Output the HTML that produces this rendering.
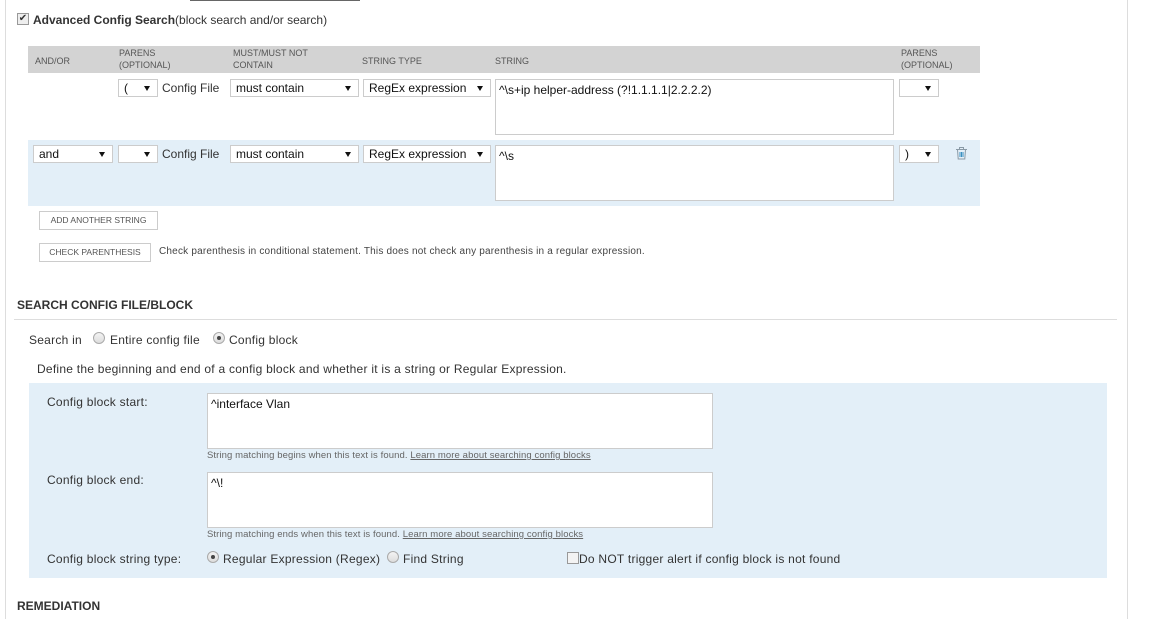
<!DOCTYPE html>
<html><head><meta charset="utf-8"><style>
*{box-sizing:border-box;margin:0;padding:0}
body{width:1157px;height:619px;background:#fff;position:relative;overflow:hidden;font-family:"Liberation Sans",sans-serif;color:#333}
.a{position:absolute;white-space:nowrap}
.sel{position:absolute;background:#fff;border:1px solid #ccc;height:18px;font-size:12px;color:#111;padding:1px 5px;line-height:14px}
.sel:after{content:"";position:absolute;right:7px;top:6px;border-left:3.5px solid transparent;border-right:3.5px solid transparent;border-top:5px solid #111}
.ta{position:absolute;background:#fff;border:1px solid #ccc;font-size:12px;color:#111;padding:4px 3px;line-height:13px}
.h{position:absolute;font-size:9px;color:#555;line-height:12px}
.btn{position:absolute;border:1px solid #ccc;background:#fff;font-size:8.5px;color:#555;text-align:center;line-height:16px}
.lbl{position:absolute;font-size:12px;color:#333;letter-spacing:0.25px;white-space:nowrap}
.radio{position:absolute;width:12px;height:12px;border-radius:50%;border:1px solid #aaa;background:linear-gradient(#f3f3f3,#ddd)}
.radio.on:after{content:"";position:absolute;left:3px;top:3px;width:4px;height:4px;border-radius:50%;background:#444}
.hint{position:absolute;font-size:9.5px;color:#666;letter-spacing:0.1px;white-space:nowrap}
.hint u{color:#666}
</style></head><body>
<div class="a" style="left:5px;top:0;width:1px;height:619px;background:#ddd"></div>
<div class="a" style="left:1127px;top:0;width:1px;height:619px;background:#ddd"></div>
<div class="a" style="left:190px;top:0;width:170px;height:1px;background:#666"></div>

<div class="a" style="left:17px;top:13px;width:12px;height:12px;border:1px solid #999;background:#eee;font-size:10px;line-height:10px;text-align:center;color:#333">✔</div>
<div class="a" style="left:33px;top:13px;font-size:12px;color:#333"><b>Advanced Config Search</b>(block search and/or search)</div>

<div class="a" style="left:28px;top:46px;width:952px;height:27px;background:#d3d3d3"></div>
<div class="h" style="left:35px;top:55px">AND/OR</div>
<div class="h" style="left:119px;top:47px">PARENS<br>(OPTIONAL)</div>
<div class="h" style="left:233px;top:47px">MUST/MUST NOT<br>CONTAIN</div>
<div class="h" style="left:362px;top:55px">STRING TYPE</div>
<div class="h" style="left:495px;top:55px">STRING</div>
<div class="h" style="left:901px;top:47px">PARENS<br>(OPTIONAL)</div>

<div class="sel" style="left:118px;top:79px;width:40px">(</div>
<div class="lbl" style="left:162px;top:81px;letter-spacing:0">Config File</div>
<div class="sel" style="left:230px;top:79px;width:129px">must contain</div>
<div class="sel" style="left:363px;top:79px;width:128px">RegEx expression</div>
<div class="ta" style="left:495px;top:79px;width:399px;height:56px">^\s+ip helper-address (?!1.1.1.1|2.2.2.2)</div>
<div class="sel" style="left:899px;top:79px;width:40px"></div>

<div class="a" style="left:28px;top:140px;width:952px;height:66px;background:#e3eff8"></div>
<div class="sel" style="left:33px;top:145px;width:80px">and</div>
<div class="sel" style="left:118px;top:145px;width:40px"></div>
<div class="lbl" style="left:162px;top:147px;letter-spacing:0">Config File</div>
<div class="sel" style="left:230px;top:145px;width:129px">must contain</div>
<div class="sel" style="left:363px;top:145px;width:128px">RegEx expression</div>
<div class="ta" style="left:495px;top:145px;width:399px;height:56px">^\s</div>
<div class="sel" style="left:899px;top:145px;width:40px">)</div>
<svg class="a" style="left:955px;top:146px" width="13" height="14" viewBox="0 0 13 14"><g fill="none" stroke="#8a9aa6" stroke-width="1"><path d="M1 3.5h11M4.5 3.5V1.5h4v2M2.5 3.5l.7 9.5h6.6l.7-9.5"/><path d="M5 6v5M6.5 6v5M8 6v5" stroke="#3a8fc0"/></g></svg>

<div class="btn" style="left:39px;top:211px;width:119px;height:19px">ADD ANOTHER STRING</div>
<div class="btn" style="left:39px;top:243px;width:112px;height:19px">CHECK PARENTHESIS</div>
<div class="a" style="left:159px;top:246px;font-size:10px;letter-spacing:0.2px;color:#444">Check parenthesis in conditional statement. This does not check any parenthesis in a regular expression.</div>

<div class="a" style="left:17px;top:298px;font-size:12px;font-weight:bold;color:#333">SEARCH CONFIG FILE/BLOCK</div>
<div class="a" style="left:14px;top:319px;width:1103px;height:1px;background:#ddd"></div>
<div class="lbl" style="left:29px;top:333px">Search in</div>
<div class="radio" style="left:93px;top:332px"></div>
<div class="lbl" style="left:110px;top:333px">Entire config file</div>
<div class="radio on" style="left:213px;top:332px"></div>
<div class="lbl" style="left:229px;top:333px">Config block</div>
<div class="lbl" style="left:37px;top:362px">Define the beginning and end of a config block and whether it is a string or Regular Expression.</div>

<div class="a" style="left:29px;top:383px;width:1078px;height:195px;background:#e3eff8"></div>
<div class="lbl" style="left:47px;top:395px">Config block start:</div>
<div class="ta" style="left:207px;top:393px;width:506px;height:56px">^interface Vlan</div>
<div class="hint" style="left:207px;top:450px">String matching begins when this text is found. <u>Learn more about searching config blocks</u></div>
<div class="lbl" style="left:47px;top:473px">Config block end:</div>
<div class="ta" style="left:207px;top:472px;width:506px;height:56px">^\!</div>
<div class="hint" style="left:207px;top:529px">String matching ends when this text is found. <u>Learn more about searching config blocks</u></div>
<div class="lbl" style="left:47px;top:552px">Config block string type:</div>
<div class="radio on" style="left:207px;top:551px"></div>
<div class="lbl" style="left:223px;top:552px">Regular Expression (Regex)</div>
<div class="radio" style="left:387px;top:551px"></div>
<div class="lbl" style="left:403px;top:552px">Find String</div>
<div class="a" style="left:567px;top:552px;width:12px;height:12px;border:1px solid #999;background:#f3f3f3"></div>
<div class="lbl" style="left:579px;top:552px">Do NOT trigger alert if config block is not found</div>

<div class="a" style="left:17px;top:599px;font-size:12px;font-weight:bold;color:#333">REMEDIATION</div>
</body></html>
